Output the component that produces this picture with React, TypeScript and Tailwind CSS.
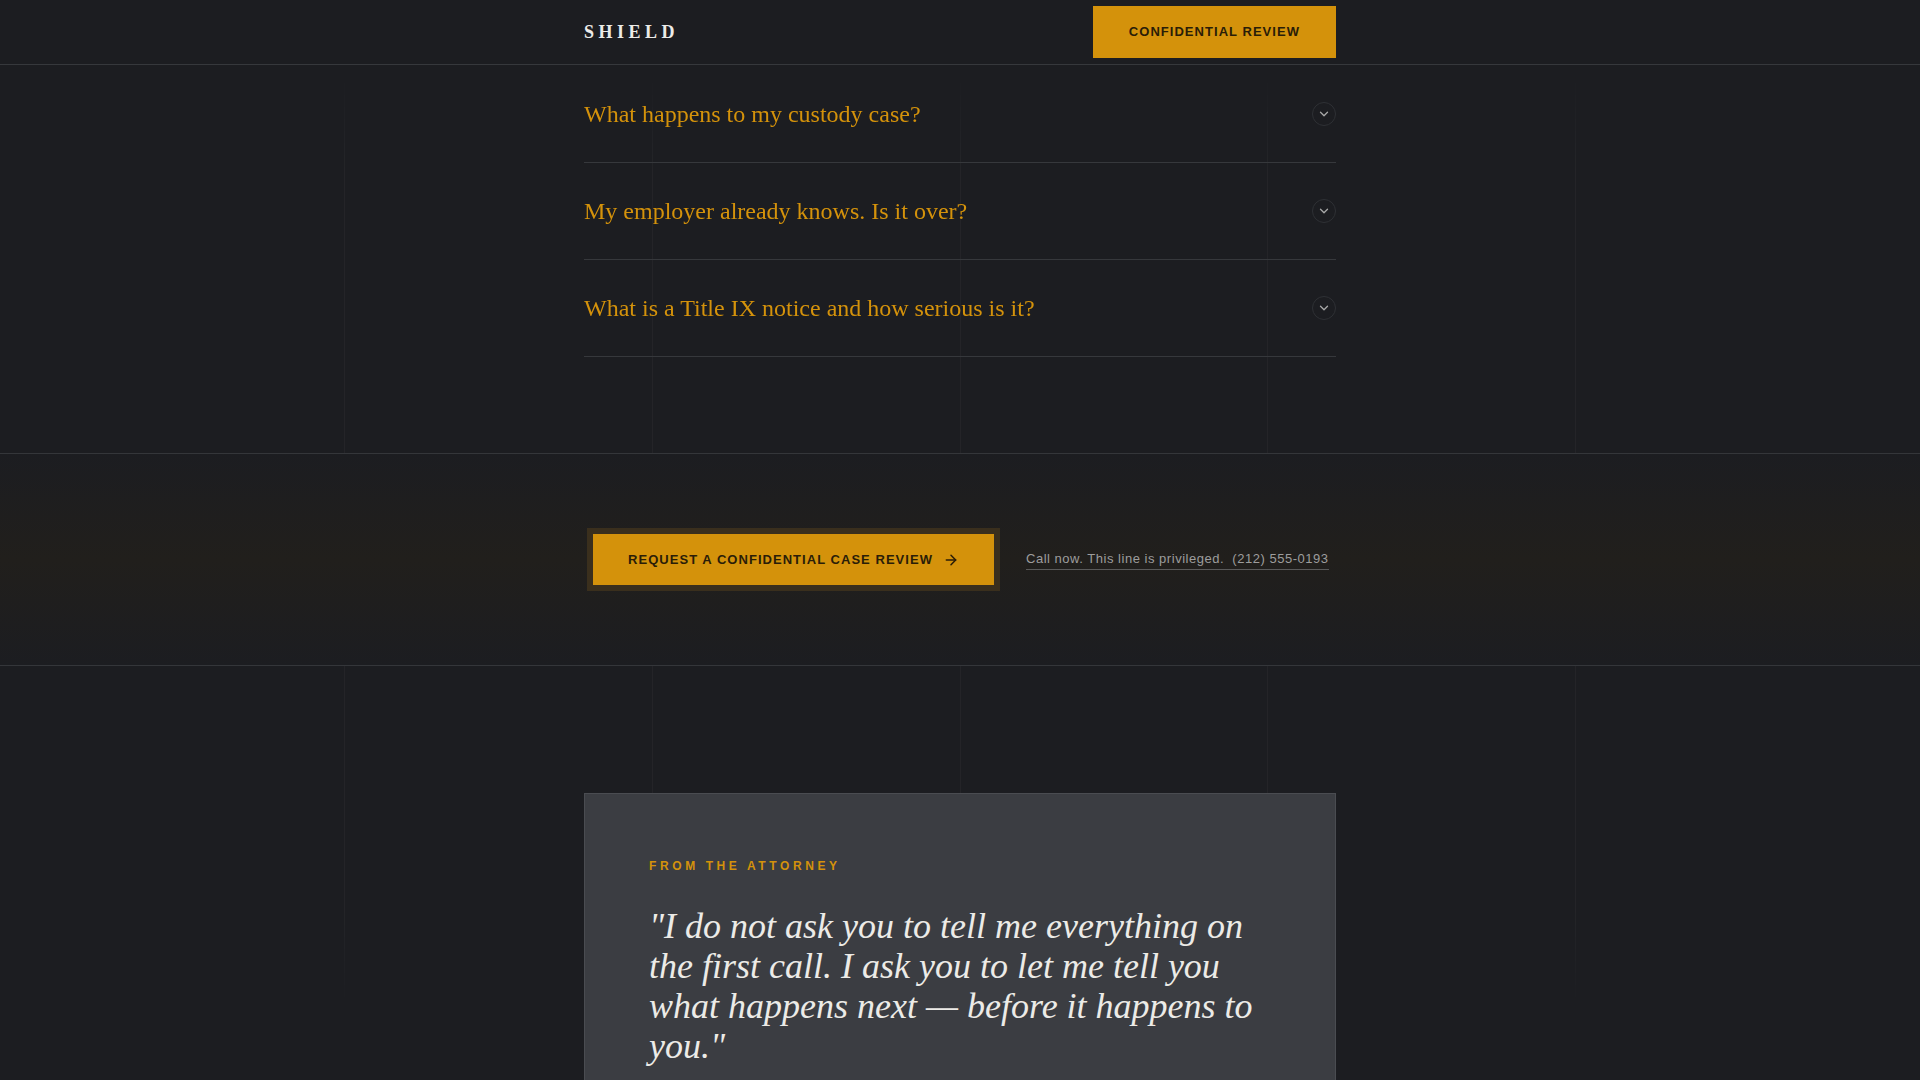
import { ArrowRight, ChevronDown } from 'lucide-react'

const faqs = [
  'What happens to my custody case?',
  'My employer already knows. Is it over?',
  'What is a Title IX notice and how serious is it?',
]

const serif = "font-['Liberation_Serif','Times_New_Roman',serif]"
const sans = "font-['Liberation_Sans',Arial,sans-serif]"

function GridLines() {
  return (
    <div className="pointer-events-none fixed inset-0 flex justify-center [mask-image:linear-gradient(to_bottom,transparent_6%,black_16%,black_84%,transparent_94%)]">
      <div className="flex w-[1232px] justify-between">
        {[0, 1, 2, 3, 4].map((i) => (
          <div key={i} className="h-full w-px bg-white/[0.035]" />
        ))}
      </div>
    </div>
  )
}

export default function App() {
  return (
    <div className={`relative min-h-screen bg-[#1c1d21] ${sans}`}>
      <GridLines />

      <header className="relative h-[65px] border-b border-[#36383c] bg-[#1c1d21]">
        <div className="mx-auto flex h-full max-w-[800px] items-center justify-between px-6">
          <div className={`${serif} text-lg font-bold tracking-[0.25em] text-[#ecebe8]`}>SHIELD</div>
          <button className="h-[52px] bg-[#d4920b] px-9 text-[13px] font-bold tracking-[0.08em] text-[#2a1d08]">
            CONFIDENTIAL REVIEW
          </button>
        </div>
      </header>

      <section className="relative border-b border-[#34363a] pt-px pb-24">
        <div className="mx-auto max-w-[800px] px-6">
          {faqs.map((q) => (
            <div key={q} className="flex items-center justify-between border-b border-[#36383c] py-8">
              <span className={`${serif} text-2xl leading-8 text-[#d4920b]`}>{q}</span>
              <span className="flex h-6 w-6 items-center justify-center rounded-full border border-[#2f3135] text-[#a8a8a8]">
                <ChevronDown className="h-3.5 w-3.5" strokeWidth={2.25} />
              </span>
            </div>
          ))}
        </div>
      </section>

      <section className="relative border-b border-[#34363a] bg-[linear-gradient(to_bottom,#1c1d21,#211f1c_50%,#1c1d21)] py-20">
        <div className="mx-auto flex max-w-[800px] items-center gap-8 px-6">
          <button className="ml-[9px] flex h-[51px] items-center gap-2.5 bg-[#d4920b] px-[35px] text-[13px] font-bold tracking-[0.08em] text-[#2a1d08] shadow-[0_0_0_6px_#3a2f1d]">
            REQUEST A CONFIDENTIAL CASE REVIEW
            <ArrowRight className="h-4 w-4" strokeWidth={2.25} />
          </button>
          <a className="border-b border-[#5a5a5a] text-[13px] leading-5 tracking-[0.04em] text-[#9d9d9d]">
            Call now. This line is privileged.&nbsp; (212) 555-0193
          </a>
        </div>
      </section>

      <section className="relative pt-[127px]">
        <div className="mx-auto max-w-[800px] px-6">
          <div className="border border-[#4a4c51] bg-[#3b3d42] px-16 pt-16 pb-16">
            <div className="text-xs font-bold tracking-[0.3em] text-[#d4920b]">FROM THE ATTORNEY</div>
            <p className={`${serif} mt-8 text-4xl leading-10 text-[#ecebe7] italic`}>
              "I do not ask you to tell me everything on the first call. I ask you to let me tell you what happens next — before it happens to you."
            </p>
          </div>
        </div>
      </section>
    </div>
  )
}
